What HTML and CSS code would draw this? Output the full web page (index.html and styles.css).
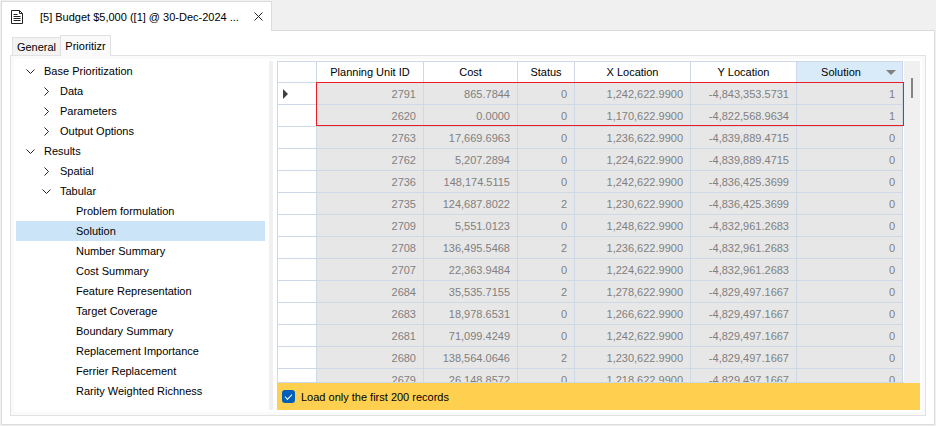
FILE: index.html
```html
<!DOCTYPE html>
<html lang="en">
<head>
<meta charset="utf-8">
<title>Prioritizr results</title>
<link rel="stylesheet" href="styles.css">
</head>
<body>
<header class="doc-strip">
  <div class="doc-tab">
    <svg class="doc-icon" width="12" height="14" viewBox="0 0 12 14" aria-hidden="true"><path d="M.5.5h8l3 3v10H.5zM8.5.5v3h3M2.500 4.500h4M2.500 6.500h7M2.500 8.500h7M2.500 10.500h7"/></svg>
    <span class="doc-title">[5] Budget $5,000 ([1] @ 30-Dec-2024 ...</span>
    <button class="doc-close" type="button" aria-label="Close"><svg width="9" height="9" viewBox="0 0 9 9"><path d="M.5.5l8 8M8.500.5l-8 8"/></svg></button>
  </div>
  <div class="doc-rest"></div>
</header>
<main class="doc">
  <nav class="tabs">
    <button class="tab" type="button">General</button>
    <button class="tab tab-active" type="button">Prioritizr</button>
  </nav>
  <section class="panel">
    <ul class="tree">
      <li><button class="node l1" type="button"><svg class="chev" viewBox="0 0 9 9"><path d="M.5 2.500l4 4 4-4"/></svg>Base Prioritization</button></li>
      <li><button class="node l2" type="button"><svg class="chev" viewBox="0 0 9 9"><path d="M2.500.5l4 4-4 4"/></svg>Data</button></li>
      <li><button class="node l2" type="button"><svg class="chev" viewBox="0 0 9 9"><path d="M2.500.5l4 4-4 4"/></svg>Parameters</button></li>
      <li><button class="node l2" type="button"><svg class="chev" viewBox="0 0 9 9"><path d="M2.500.5l4 4-4 4"/></svg>Output Options</button></li>
      <li><button class="node l1" type="button"><svg class="chev" viewBox="0 0 9 9"><path d="M.5 2.500l4 4 4-4"/></svg>Results</button></li>
      <li><button class="node l2" type="button"><svg class="chev" viewBox="0 0 9 9"><path d="M2.500.5l4 4-4 4"/></svg>Spatial</button></li>
      <li><button class="node l2" type="button"><svg class="chev" viewBox="0 0 9 9"><path d="M.5 2.500l4 4 4-4"/></svg>Tabular</button></li>
      <li><button class="node l3" type="button">Problem formulation</button></li>
      <li><button class="node l3 selected" type="button">Solution</button></li>
      <li><button class="node l3" type="button">Number Summary</button></li>
      <li><button class="node l3" type="button">Cost Summary</button></li>
      <li><button class="node l3" type="button">Feature Representation</button></li>
      <li><button class="node l3" type="button">Target Coverage</button></li>
      <li><button class="node l3" type="button">Boundary Summary</button></li>
      <li><button class="node l3" type="button">Replacement Importance</button></li>
      <li><button class="node l3" type="button">Ferrier Replacement</button></li>
      <li><button class="node l3" type="button">Rarity Weighted Richness</button></li>
    </ul>
    <div class="splitter"></div>
    <div class="view">
      <div class="grid-area">
        <div class="grid">
          <table>
            <colgroup><col class="c-mark"><col class="c-id"><col class="c-cost"><col class="c-status"><col class="c-x"><col class="c-y"><col></colgroup>
            <thead><tr><th></th><th>Planning Unit ID</th><th>Cost</th><th>Status</th><th>X Location</th><th>Y Location</th><th class="sorted"><span class="sort-head">Solution<i class="sort-arrow"></i></span></th></tr></thead>
            <tbody>
              <tr><td class="mark"><i class="row-arrow"></i></td><td>2791</td><td>865.7844</td><td>0</td><td>1,242,622.9900</td><td>-4,843,353.5731</td><td>1</td></tr>
              <tr><td class="mark"></td><td>2620</td><td>0.0000</td><td>0</td><td>1,170,622.9900</td><td>-4,822,568.9634</td><td>1</td></tr>
              <tr><td class="mark"></td><td>2763</td><td>17,669.6963</td><td>0</td><td>1,236,622.9900</td><td>-4,839,889.4715</td><td>0</td></tr>
              <tr><td class="mark"></td><td>2762</td><td>5,207.2894</td><td>0</td><td>1,224,622.9900</td><td>-4,839,889.4715</td><td>0</td></tr>
              <tr><td class="mark"></td><td>2736</td><td>148,174.5115</td><td>0</td><td>1,242,622.9900</td><td>-4,836,425.3699</td><td>0</td></tr>
              <tr><td class="mark"></td><td>2735</td><td>124,687.8022</td><td>2</td><td>1,230,622.9900</td><td>-4,836,425.3699</td><td>0</td></tr>
              <tr><td class="mark"></td><td>2709</td><td>5,551.0123</td><td>0</td><td>1,248,622.9900</td><td>-4,832,961.2683</td><td>0</td></tr>
              <tr><td class="mark"></td><td>2708</td><td>136,495.5468</td><td>2</td><td>1,236,622.9900</td><td>-4,832,961.2683</td><td>0</td></tr>
              <tr><td class="mark"></td><td>2707</td><td>22,363.9484</td><td>0</td><td>1,224,622.9900</td><td>-4,832,961.2683</td><td>0</td></tr>
              <tr><td class="mark"></td><td>2684</td><td>35,535.7155</td><td>2</td><td>1,278,622.9900</td><td>-4,829,497.1667</td><td>0</td></tr>
              <tr><td class="mark"></td><td>2683</td><td>18,978.6531</td><td>0</td><td>1,266,622.9900</td><td>-4,829,497.1667</td><td>0</td></tr>
              <tr><td class="mark"></td><td>2681</td><td>71,099.4249</td><td>0</td><td>1,242,622.9900</td><td>-4,829,497.1667</td><td>0</td></tr>
              <tr><td class="mark"></td><td>2680</td><td>138,564.0646</td><td>2</td><td>1,230,622.9900</td><td>-4,829,497.1667</td><td>0</td></tr>
              <tr><td class="mark"></td><td>2679</td><td>26,148.8572</td><td>0</td><td>1,218,622.9900</td><td>-4,829,497.1667</td><td>0</td></tr>
            </tbody>
          </table>
          <div class="highlight"></div>
        </div>
        <div class="scrollbar"><div class="thumb"></div></div>
      </div>
      <label class="load-bar" for="first200"><input type="checkbox" id="first200" checked>Load only the first 200 records</label>
    </div>
  </section>
</main>
</body>
</html>
```

FILE: styles.css
```css
* { box-sizing: border-box; }

body {
  margin: 0;
  height: 100vh;
  padding: 1px;
  display: flex;
  flex-direction: column;
  background: #f0f0f0;
  color: #000;
  font: 11px/20px "Liberation Sans", Arial, sans-serif;
}

button {
  font: inherit;
  color: inherit;
  border: 0;
  background: none;
  padding: 0;
}

svg { fill: none; stroke: #222; flex: none; }

.doc-strip { display: flex; height: 30px; flex: none; }

.doc-tab {
  display: flex;
  align-items: center;
  width: 271px;
  padding: 0 8px 0 9px;
  background: #fff;
  border: 1px solid #dcdcdc;
  border-bottom: 0;
}

.doc-title { flex: 1; margin-left: 17px; white-space: nowrap; }

.doc-close { display: flex; }

.doc-rest { flex: 1; border-bottom: 1px solid #dcdcdc; }

.doc {
  flex: 1;
  min-height: 0;
  display: flex;
  flex-direction: column;
  padding: 4px 8px 8px;
  background: #fff;
  border: 1px solid #dcdcdc;
  border-top: 0;
}

.tabs {
  display: flex;
  align-items: flex-end;
  height: 21px;
  flex: none;
  padding-left: 2px;
  position: relative;
  z-index: 1;
}

.tab {
  height: 18px;
  margin-bottom: 1px;
  width: 48px;
  line-height: 18px;
  background: #f3f3f3;
  border: 1px solid #e0e0e0;
  border-width: 1px 0 0 1px;
}

.tab-active {
  width: 51px;
  height: 21px;
  margin-bottom: 0;
  background: #fafafa;
  border-width: 1px 1px 0;
}

.panel {
  flex: 1;
  min-height: 0;
  display: flex;
  margin-top: -1px;
  padding: 2px;
  border: 1px solid #e2e2e2;
  outline: 3px solid #fafafa;
  outline-offset: -4px;
}

.tree {
  list-style: none;
  margin: 0;
  padding: 3px 4px 0 3px;
  width: 256px;
}

.node {
  display: flex;
  align-items: center;
  width: 100%;
  height: 20px;
  text-align: left;
}

.l1 { padding-left: 10px; }
.l2 { padding-left: 26px; }
.l3 { padding-left: 60px; }

.selected { background: #cce4f7; }

.chev { width: 9px; height: 9px; margin-right: 9px; }

.splitter { width: 4px; margin: 3px 4px 3px 0; background: #f0f0f0; }

.view {
  flex: 1;
  min-width: 0;
  display: flex;
  flex-direction: column;
  padding: 3px 3px 3px 0;
}

.grid-area { flex: 1; min-height: 0; display: flex; }

.grid {
  flex: 1;
  min-width: 0;
  overflow: hidden;
  position: relative;
  padding-right: 1px;
  border-bottom: 1px solid #cfd8e6;
}

table {
  width: 100%;
  table-layout: fixed;
  border-spacing: 0;
  border: 1px solid #cfd8e6;
  border-width: 1px 0 0 1px;
}

.c-mark { width: 39px; }
.c-id { width: 107px; }
.c-cost { width: 94px; }
.c-status { width: 57px; }
.c-x { width: 116px; }
.c-y { width: 106px; }

th, td {
  padding: 0 7px;
  border: 1px solid #cfd8e6;
  border-width: 0 1px 1px 0;
  white-space: nowrap;
}

th { height: 21px; font-weight: normal; }

td {
  height: 22px;
  text-align: right;
  color: #808080;
  background: #e7e7e7;
}

.mark { background: #fff; padding: 0 0 0 5px; }

.sorted { background: #d9ebf9; }

.sort-head {
  display: grid;
  grid-template-columns: 1fr 10px;
  gap: 8px;
  align-items: center;
}

.sort-arrow {
  border: 5px solid transparent;
  border-top-color: #808080;
  border-bottom: 0;
}

.row-arrow {
  display: block;
  width: 0;
  border: 5px solid transparent;
  border-left-color: #404040;
  border-right: 0;
}

.sorted { padding-right: 6px; }

.highlight {
  position: absolute;
  top: 21px;
  left: 39px;
  right: 0;
  height: 44px;
  border: 1px solid #ed1c24;
}

.scrollbar {
  width: 16px;
  padding-top: 17px;
  background: #f0f0f0;
}

.thumb { width: 2px; height: 20px; margin-left: 7px; background: #858585; }

.load-bar {
  display: flex;
  align-items: center;
  gap: 6px;
  height: 27px;
  flex: none;
  padding-left: 5px;
  background: #ffd050;
}

.load-bar input {
  appearance: none;
  display: flex;
  justify-content: center;
  align-items: center;
  width: 13px;
  height: 13px;
  margin: 0;
  border-radius: 3px;
  background: #005fb8;
}

.load-bar input:checked::after {
  content: "";
  width: 6px;
  height: 3px;
  margin-bottom: 2px;
  border: 1px solid #fff;
  border-width: 0 0 1px 1px;
  transform: rotate(-45deg);
}
```
